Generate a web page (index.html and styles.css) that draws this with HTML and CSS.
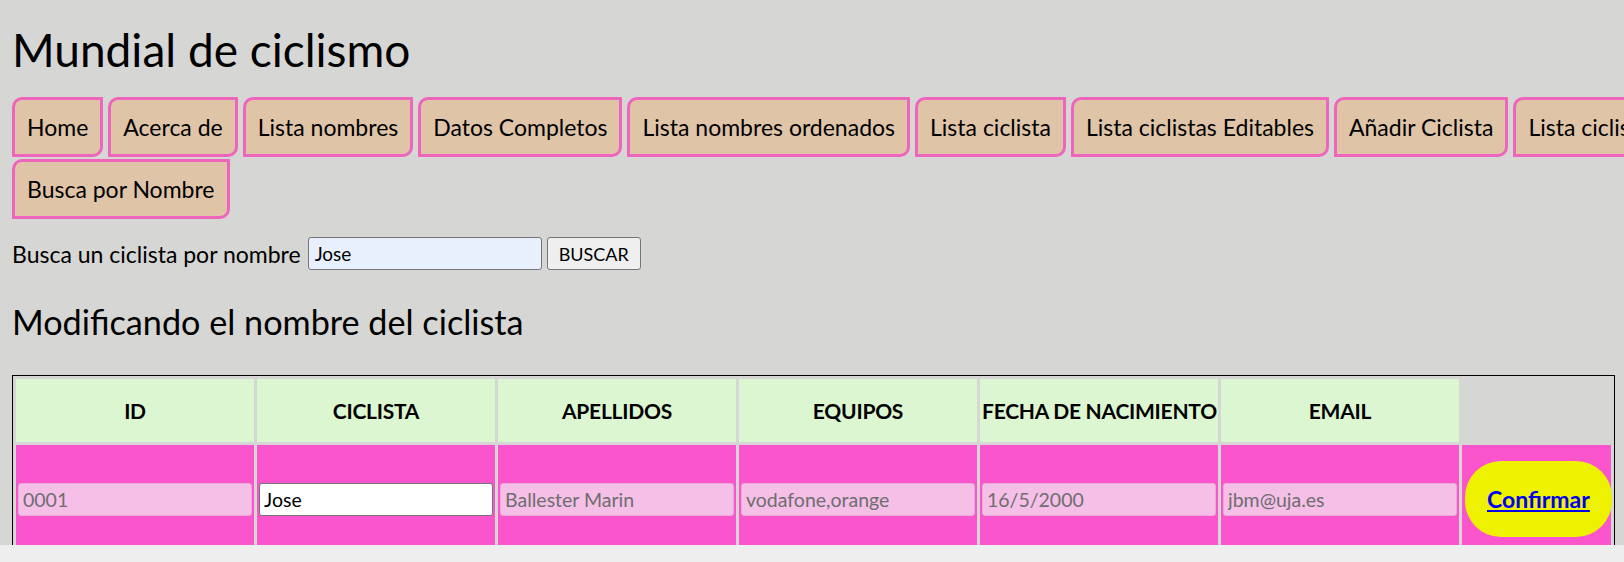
FILE: index.html
```html
<!DOCTYPE html>
<html lang="es">
<head>
<meta charset="utf-8">
<title>Mundial de ciclismo</title>
<link rel="stylesheet" href="styles.css">
</head>
<body>
<h1 class="title">Mundial de ciclismo</h1>
<nav class="nav">
  <div class="nav-row">
    <a class="nav-btn" href="#">Home</a>
    <a class="nav-btn" href="#">Acerca de</a>
    <a class="nav-btn" href="#">Lista nombres</a>
    <a class="nav-btn" href="#">Datos Completos</a>
    <a class="nav-btn" href="#">Lista nombres ordenados</a>
    <a class="nav-btn" href="#">Lista ciclista</a>
    <a class="nav-btn" href="#">Lista ciclistas Editables</a>
    <a class="nav-btn" href="#">Añadir Ciclista</a>
    <a class="nav-btn" href="#">Lista ciclistas Borrables</a>
  </div>
  <div class="nav-row">
    <a class="nav-btn" href="#">Busca por Nombre</a>
  </div>
</nav>
<form class="search">
  <label class="search-label" for="q">Busca un ciclista por nombre</label>
  <input id="q" class="search-input" type="text" value="Jose">
  <button class="search-btn" type="button">BUSCAR</button>
</form>
<h2 class="subtitle">Modificando el nombre del ciclista</h2>
<table class="grid">
  <colgroup>
    <col class="col-std"><col class="col-std"><col class="col-std"><col class="col-std"><col class="col-std"><col class="col-std"><col class="col-act">
  </colgroup>
  <thead>
    <tr>
      <th class="head">ID</th>
      <th class="head">CICLISTA</th>
      <th class="head">APELLIDOS</th>
      <th class="head">EQUIPOS</th>
      <th class="head">FECHA DE NACIMIENTO</th>
      <th class="head">EMAIL</th>
      <th class="head-empty"></th>
    </tr>
  </thead>
  <tbody>
    <tr>
      <td class="cell"><input class="cell-input ro" type="text" value="0001" readonly></td>
      <td class="cell"><input class="cell-input edit" type="text" value="Jose"></td>
      <td class="cell"><input class="cell-input ro" type="text" value="Ballester Marin" readonly></td>
      <td class="cell"><input class="cell-input ro" type="text" value="vodafone,orange" readonly></td>
      <td class="cell"><input class="cell-input ro" type="text" value="16/5/2000" readonly></td>
      <td class="cell"><input class="cell-input ro" type="text" value="jbm@uja.es" readonly></td>
      <td class="cell action"><a class="confirm" href="#">Confirmar</a></td>
    </tr>
  </tbody>
</table>
<div class="scroll-strip"></div>
</body>
</html>
```
FILE: styles.css
```css
html {
  overflow: hidden;
  background: #d6d6d4;
}

body {
  margin: 0;
  padding: 0 12px;
  font-family: Lato, "Liberation Sans", sans-serif;
  font-size: 23px;
  color: #000;
}

.title {
  margin: 20px 0 17px;
  font-size: 46px;
  line-height: 60px;
  font-weight: 400;
}

.nav {
  display: flex;
  flex-direction: column;
  gap: 2px;
}

.nav-row {
  display: flex;
  gap: 5px;
  flex-wrap: nowrap;
}

.nav-btn {
  flex-shrink: 0;
  white-space: nowrap;
  display: block;
  padding: 12px 12px;
  line-height: 30px;
  background: #dfc4a8;
  border: 3px solid #ee66bb;
  border-radius: 10px 0 10px 0;
  color: #000;
  text-decoration: none;
}

.search {
  display: flex;
  align-items: center;
  height: 33px;
  margin: 18px 0 0;
}

.search-label {
  margin-right: 7px;
}

.search-input {
  box-sizing: border-box;
  width: 234px;
  height: 33px;
  padding: 0 6px;
  font-family: inherit;
  font-size: 19px;
  background: #e8f0fe;
  border: 1px solid #767676;
  border-radius: 3px;
  color: #000;
}

.search-btn {
  box-sizing: border-box;
  height: 33px;
  margin-left: 5px;
  padding: 0 11px;
  font-family: inherit;
  font-size: 18px;
  background: #efefef;
  border: 1px solid #767676;
  border-radius: 3px;
  color: #000;
}

.subtitle {
  margin: 30px 0 31px;
  font-size: 34.2px;
  line-height: 44px;
  font-weight: 400;
}

.grid {
  width: 1603px;
  table-layout: fixed;
  border: 1px solid #000;
  border-spacing: 3px;
}

.col-std {
  width: 238px;
}

.col-act {
  width: 149px;
}

.head {
  padding: 16px 2px;
  line-height: 31px;
  background: #dcf6d2;
  font-size: 21px;
  letter-spacing: -0.25px;
  font-weight: 700;
  text-align: center;
  white-space: nowrap;
}

.head-empty {
  padding: 0;
}

.cell {
  padding: 16px 2px;
  background: #fa55cc;
  vertical-align: middle;
}

.cell-input {
  display: block;
  box-sizing: border-box;
  width: 100%;
  height: 33px;
  padding: 0 4px;
  font-family: inherit;
  font-size: 19.5px;
  border: 1px solid;
  border-radius: 3px;
}

.ro {
  background: #f5bfe7;
  border-color: #e8aad8;
  color: #6e6e6e;
}

.edit {
  background: #fff;
  border-color: #767676;
  color: #000;
}

.action {
  padding: 16px 1px 16px 3px;
}

.confirm {
  display: inline-block;
  padding: 23px 22px;
  line-height: 30px;
  background: #eef200;
  border-radius: 36px;
  color: #0000ee;
  font-size: 23px;
  font-weight: 700;
  text-decoration: underline;
}

.scroll-strip {
  position: fixed;
  left: 0;
  right: 0;
  bottom: 0;
  height: 17px;
  background: #eeeeee;
}
```
